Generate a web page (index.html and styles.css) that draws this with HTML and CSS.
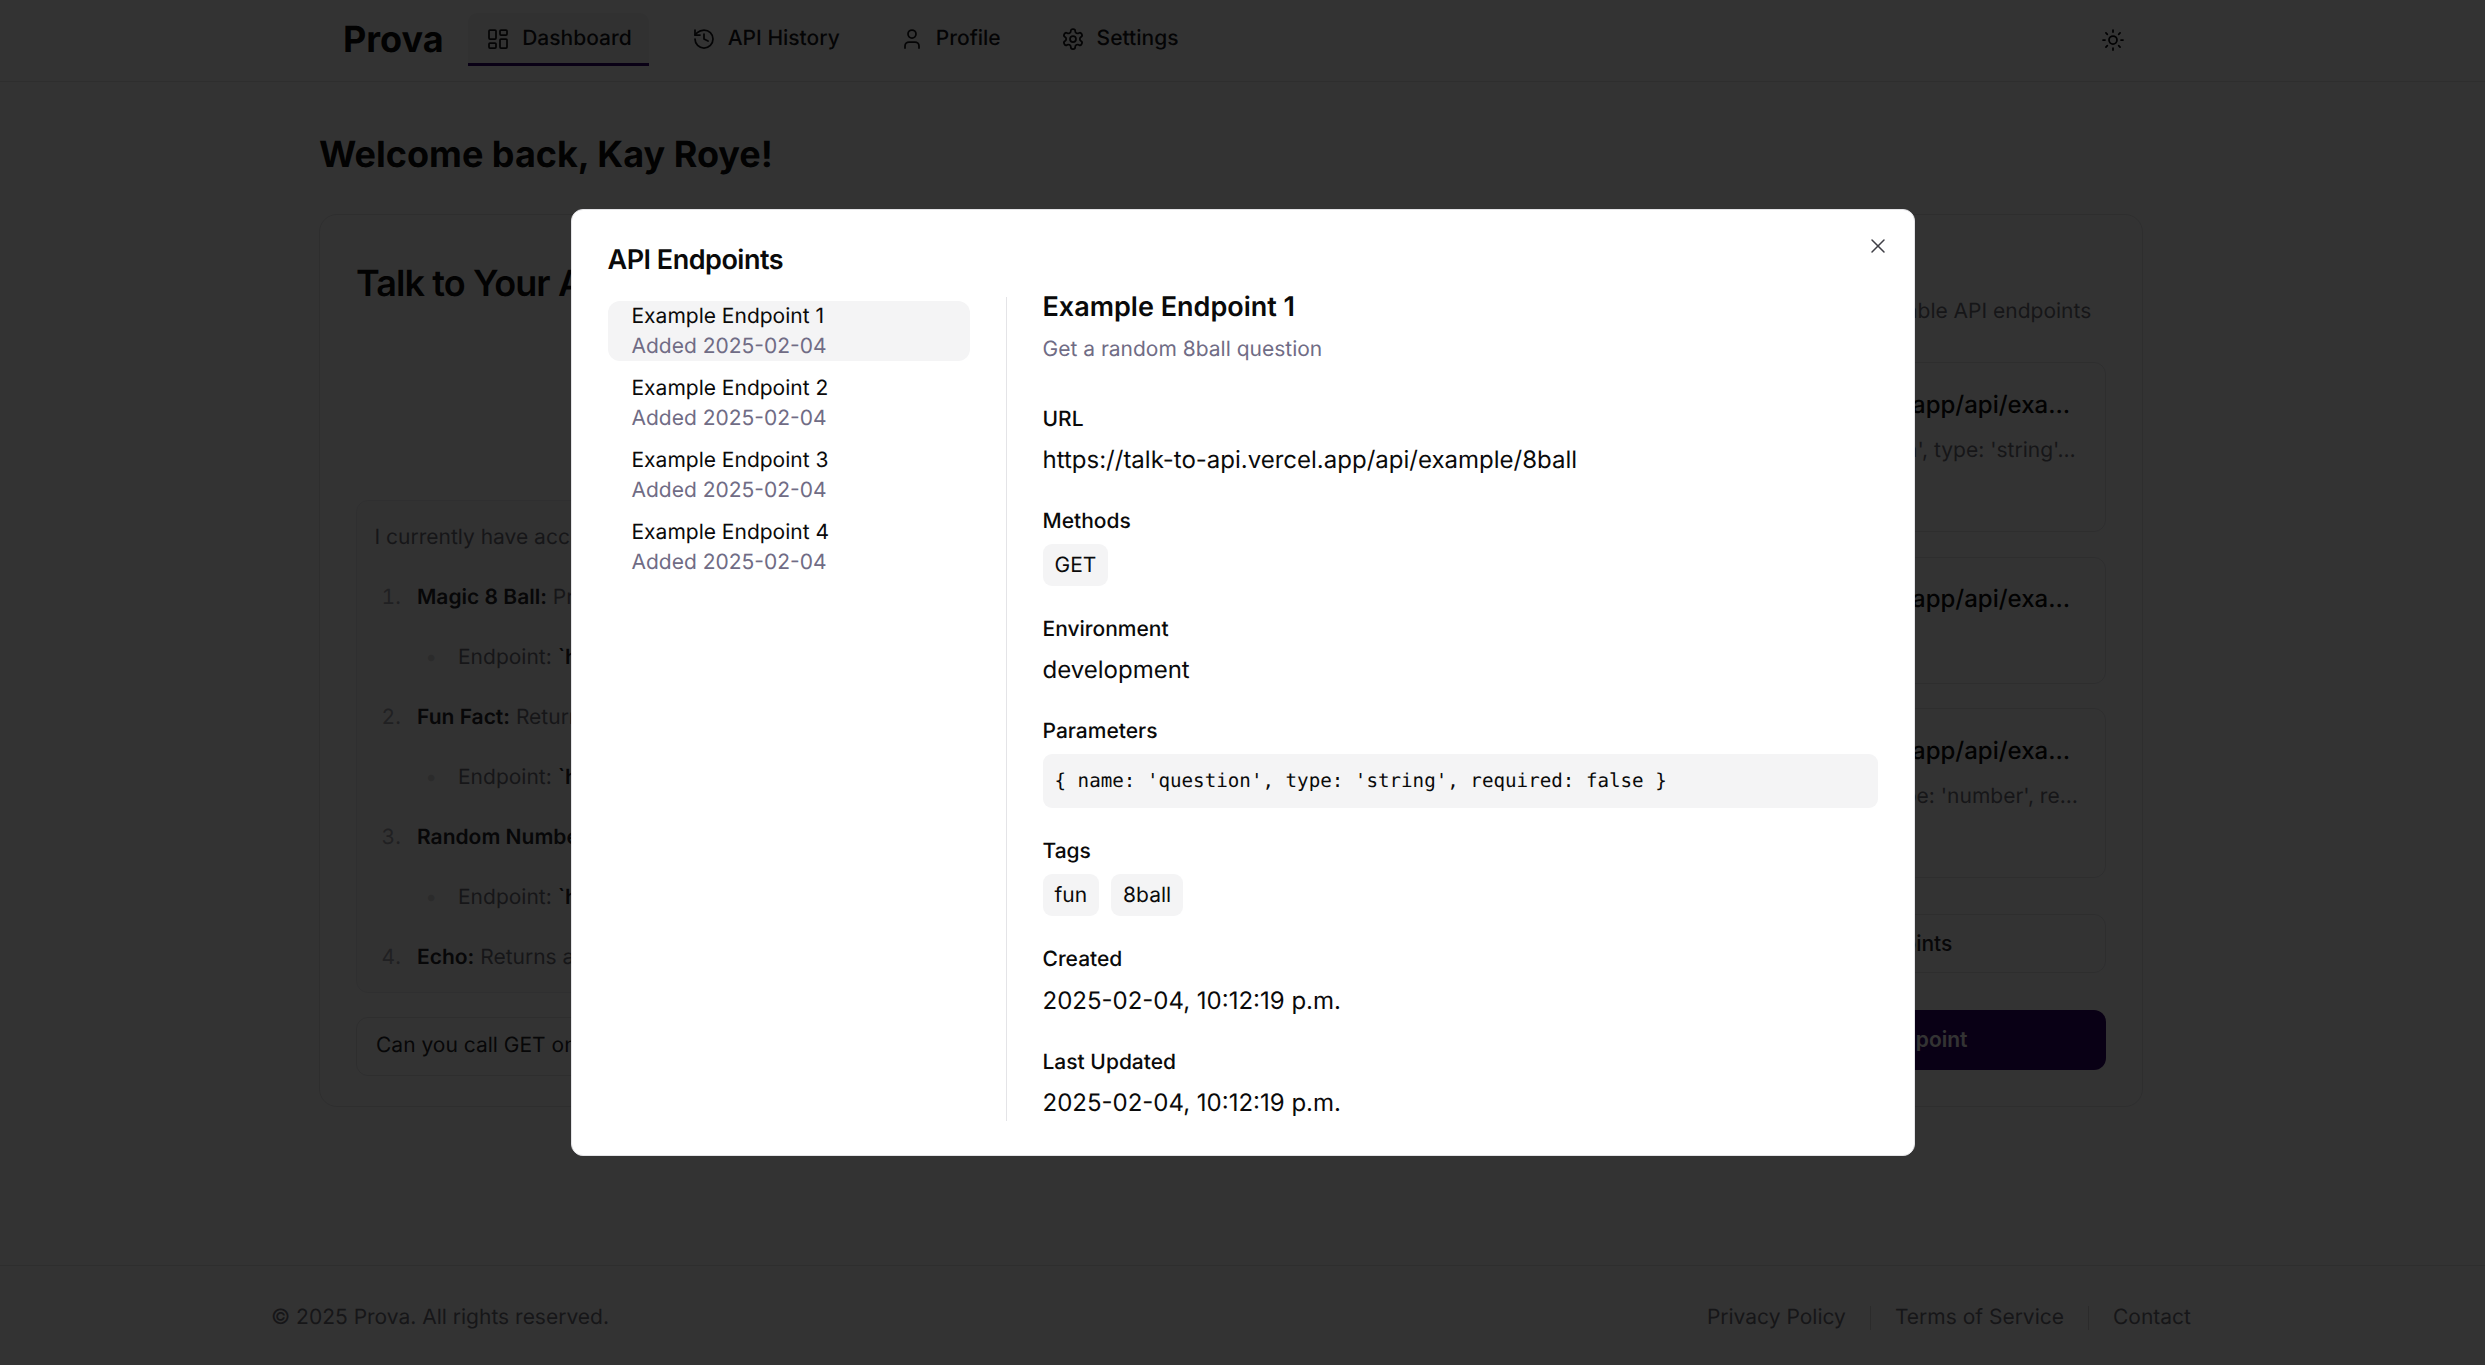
FILE: index.html
```html
<!DOCTYPE html>
<html lang="en">
<head>
<meta charset="utf-8">
<title>Prova</title>
<link rel="stylesheet" href="styles.css">
</head>
<body>
<div class="page">
  <header class="topbar">
    <div class="topbar-inner">
      <a class="brand">Prova</a>
      <nav class="nav">
        <a class="tab tab-active">
          <svg class="icon" viewBox="0 0 24 24"><rect x="3" y="3" width="7" height="9" rx="1"/><rect x="14" y="3" width="7" height="5" rx="1"/><rect x="14" y="12" width="7" height="9" rx="1"/><rect x="3" y="16" width="7" height="5" rx="1"/></svg>
          Dashboard
        </a>
        <a class="tab">
          <svg class="icon" viewBox="0 0 24 24"><path d="M3 12a9 9 0 1 0 9-9 9.75 9.75 0 0 0-6.74 2.74L3 8"/><path d="M3 3v5h5"/><path d="M12 7v5l4 2"/></svg>
          API History
        </a>
        <a class="tab">
          <svg class="icon" viewBox="0 0 24 24"><circle cx="12" cy="7" r="4"/><path d="M5 21v-2a4 4 0 0 1 4-4h6a4 4 0 0 1 4 4v2"/></svg>
          Profile
        </a>
        <a class="tab">
          <svg class="icon" viewBox="0 0 24 24"><path d="M12.22 2h-.44a2 2 0 0 0-2 2v.18a2 2 0 0 1-1 1.73l-.43.25a2 2 0 0 1-2 0l-.15-.08a2 2 0 0 0-2.73.73l-.22.38a2 2 0 0 0 .73 2.73l.15.1a2 2 0 0 1 1 1.72v.51a2 2 0 0 1-1 1.74l-.15.09a2 2 0 0 0-.73 2.73l.22.38a2 2 0 0 0 2.73.73l.15-.08a2 2 0 0 1 2 0l.43.25a2 2 0 0 1 1 1.73V20a2 2 0 0 0 2 2h.44a2 2 0 0 0 2-2v-.18a2 2 0 0 1 1-1.73l.43-.25a2 2 0 0 1 2 0l.15.08a2 2 0 0 0 2.73-.73l.22-.39a2 2 0 0 0-.73-2.73l-.15-.08a2 2 0 0 1-1-1.74v-.5a2 2 0 0 1 1-1.74l.15-.09a2 2 0 0 0 .73-2.73l-.22-.38a2 2 0 0 0-2.73-.73l-.15.08a2 2 0 0 1-2 0l-.43-.25a2 2 0 0 1-1-1.73V4a2 2 0 0 0-2-2z"/><circle cx="12" cy="12" r="3"/></svg>
          Settings
        </a>
      </nav>
      <button class="theme-btn" type="button" aria-label="Toggle theme">
        <svg class="icon" viewBox="0 0 24 24"><circle cx="12" cy="12" r="4"/><path d="M12 2v2"/><path d="M12 20v2"/><path d="m4.93 4.93 1.41 1.41"/><path d="m17.66 17.66 1.41 1.41"/><path d="M2 12h2"/><path d="M20 12h2"/><path d="m6.34 17.66-1.41 1.41"/><path d="m19.07 4.93-1.41 1.41"/></svg>
      </button>
    </div>
  </header>

  <main class="main">
    <h1 class="welcome">Welcome back, Kay Roye!</h1>
    <div class="dash-grid">
      <section class="card chat-card">
        <h2 class="card-title chat-title">Talk to Your API</h2>
        <div class="messages">
          <p class="msg-intro">I currently have access to the following API endpoints:</p>
          <ol class="msg-list">
            <li><strong>Magic 8 Ball:</strong> Provides a random answer to a question.
              <ul><li>Endpoint: <strong>`https://talk-to-api.vercel.app/api/example/8ball`</strong></li></ul></li>
            <li><strong>Fun Fact:</strong> Returns a random fun fact.
              <ul><li>Endpoint: <strong>`https://talk-to-api.vercel.app/api/example/fact`</strong></li></ul></li>
            <li><strong>Random Number:</strong> Returns a random number in a range.
              <ul><li>Endpoint: <strong>`https://talk-to-api.vercel.app/api/example/random`</strong></li></ul></li>
            <li><strong>Echo:</strong> Returns a copy of the message you send.</li>
          </ol>
        </div>
        <div class="chat-input">Can you call GET on the 8ball endpoint?</div>
      </section>

      <section class="card endpoints-card">
        <h2 class="card-title endpoints-title">API Endpoints</h2>
        <p class="endpoints-sub">Below are all your currently available API endpoints</p>
        <div class="ep-list">
          <article class="ep-item">
            <div class="ep-url">https://talk-to-api.vercel.app/api/example/8ball</div>
            <div class="ep-desc">Parameter: { name: 'question', type: 'string', required: false }</div>
            <div class="chip-row"><span class="chip">GET</span></div>
          </article>
          <article class="ep-item">
            <div class="ep-url">https://talk-to-api.vercel.app/api/example/fact</div>
            <div class="chip-row"><span class="chip">GET</span></div>
          </article>
          <article class="ep-item">
            <div class="ep-url">https://talk-to-api.vercel.app/api/example/random</div>
            <div class="ep-desc">Parameter: { name: 'min', type: 'number', required: false }</div>
            <div class="chip-row"><span class="chip">GET</span></div>
          </article>
        </div>
        <button class="btn btn-outline" type="button">See All API Endpoints</button>
        <button class="btn btn-primary" type="button">Add a New API Endpoint</button>
      </section>
    </div>
  </main>

  <footer class="footer">
    <div class="footer-inner">
      <span>© 2025 Prova. All rights reserved.</span>
      <div class="footer-links">
        <a>Privacy Policy</a>
        <span class="sep"></span>
        <a>Terms of Service</a>
        <span class="sep"></span>
        <a>Contact</a>
      </div>
    </div>
  </footer>
</div>

<div class="overlay">
  <div class="modal" role="dialog" aria-label="API Endpoints">
    <h2 class="modal-title">API Endpoints</h2>
    <button class="modal-close" type="button" aria-label="Close">
      <svg class="icon" viewBox="0 0 24 24"><path d="M18 6 6 18"/><path d="m6 6 12 12"/></svg>
    </button>
    <div class="modal-body">
      <ul class="side-list">
        <li class="side-item side-item-active"><div class="side-name">Example Endpoint 1</div><div class="side-date">Added 2025-02-04</div></li>
        <li class="side-item"><div class="side-name">Example Endpoint 2</div><div class="side-date">Added 2025-02-04</div></li>
        <li class="side-item"><div class="side-name">Example Endpoint 3</div><div class="side-date">Added 2025-02-04</div></li>
        <li class="side-item"><div class="side-name">Example Endpoint 4</div><div class="side-date">Added 2025-02-04</div></li>
      </ul>
      <div class="detail">
        <h3 class="detail-title">Example Endpoint 1</h3>
        <p class="detail-desc">Get a random 8ball question</p>
        <div class="field">
          <div class="field-label">URL</div>
          <div class="field-value">https://talk-to-api.vercel.app/api/example/8ball</div>
        </div>
        <div class="field">
          <div class="field-label">Methods</div>
          <div class="chip-row chip-row-tight"><span class="chip">GET</span></div>
        </div>
        <div class="field">
          <div class="field-label">Environment</div>
          <div class="field-value">development</div>
        </div>
        <div class="field">
          <div class="field-label">Parameters</div>
          <pre class="code">{ name: 'question', type: 'string', required: false }</pre>
        </div>
        <div class="field">
          <div class="field-label">Tags</div>
          <div class="chip-row chip-row-tight"><span class="chip">fun</span><span class="chip">8ball</span></div>
        </div>
        <div class="field">
          <div class="field-label">Created</div>
          <div class="field-value">2025-02-04, 10:12:19 p.m.</div>
        </div>
        <div class="field">
          <div class="field-label">Last Updated</div>
          <div class="field-value">2025-02-04, 10:12:19 p.m.</div>
        </div>
      </div>
    </div>
  </div>
</div>
</body>
</html>
```
FILE: styles.css
```css
* { box-sizing: border-box; }
html, body { margin: 0; height: 100%; }
body {
  background: #fff;
  color: #0a0a0a;
  font-family: Inter, "Liberation Sans", sans-serif;
  font-size: 21px;
  line-height: 30px;
  overflow: hidden;
  text-rendering: geometricPrecision;
  -webkit-font-smoothing: antialiased;
}
h1, h2, h3, p, ul, ol, pre { margin: 0; padding: 0; }
button { font: inherit; color: inherit; background: none; border: 0; padding: 0; }
.icon {
  width: 24px;
  height: 24px;
  display: block;
  flex: none;
  fill: none;
  stroke: currentColor;
  stroke-width: 1.75;
  stroke-linecap: round;
  stroke-linejoin: round;
}

/* page */
.page {
  height: 1365px;
  padding-right: 23px;
  display: flex;
  flex-direction: column;
}
.topbar { height: 82px; border-bottom: 1px solid #e4e4e7; margin-right: -23px; padding-right: 23px; flex: none; }
.topbar-inner {
  max-width: 1920px;
  height: 81px;
  margin: 0 auto;
  padding: 0 66px 2px 72px;
  display: flex;
  align-items: center;
}
.brand { font-size: 36px; line-height: 54px; font-weight: 700; margin-right: 24.5px; padding-bottom: 1px; }
.nav { display: flex; gap: 24.5px; flex: 1; }
.tab {
  display: flex;
  align-items: center;
  gap: 12px;
  padding: 11.4px 17.5px 8.6px 18px;
  height: 53px;
  font-weight: 500;
  color: #18181b;
  border-bottom: 3px solid transparent;
}
.tab-active { background: #f4f4f5; border-bottom-color: #2e0068; border-radius: 9px 9px 0 0; }
.theme-btn { color: #09090b; }

.main { flex: 1; width: 100%; max-width: 1920px; margin: 0 auto; padding: 45px 48px 0; }
.welcome { font-size: 36px; line-height: 54px; font-weight: 700; margin-bottom: 33px; }
.dash-grid { display: grid; grid-template-columns: 2fr 1fr; grid-template-rows: 893px; gap: 36px; }
.card { border: 1px solid #e4e4e7; border-radius: 18px; padding: 36px; min-width: 0; min-height: 0; display: flex; flex-direction: column; }
.card-title { font-size: 36px; font-weight: 600; letter-spacing: -0.9px; }

.chat-card { padding-top: 41px; padding-bottom: 30px; }
.chat-title { line-height: 54px; margin-bottom: 190px; }
.messages {
  flex: 1;
  min-height: 0;
  border: 1px solid #ececef;
  background: #fafafa;
  border-radius: 12px;
  padding: 22px 18px 21px 17.5px;
  overflow: hidden;
  color: #71717a;
  white-space: nowrap;
}
.messages strong { color: #27272a; font-weight: 600; }
.msg-list { padding-left: 42.5px; margin-top: 30px; }
.msg-list > li { margin-bottom: 30px; }
.msg-list > li::marker { content: counter(list-item) ". \2002"; color: #a1a1aa; }
.msg-list ul { padding-left: 41px; margin-top: 30px; list-style: disc; }
.msg-list ul li::marker { content: "\2022\2002\2002"; color: #d4d4d8; }
.chat-input {
  margin-top: 24px;
  height: 59px;
  border: 1px solid #e4e4e7;
  border-radius: 12px;
  padding: 0 19px 2px;
  display: flex;
  align-items: center;
  color: #27272a;
}

.endpoints-title { line-height: 36px; }
.endpoints-sub { margin-top: 9.5px; color: #71717a; white-space: nowrap; }
.ep-list { margin-top: 35.5px; display: flex; flex-direction: column; gap: 24.5px; }
.ep-item { border: 1px solid #e4e4e7; border-radius: 12px; padding: 23.5px 24px 11.5px 40px; min-width: 0; }
.ep-url { font-size: 24px; line-height: 36px; font-weight: 500; white-space: nowrap; overflow: hidden; text-overflow: ellipsis; }
.ep-desc { margin-top: 13px; padding-left: 5px; color: #71717a; white-space: nowrap; overflow: hidden; text-overflow: ellipsis; }
.chip-row { display: flex; gap: 12px; margin-top: 12px; }
.chip-row-tight { margin-top: 0; }
.chip { background: #f4f4f5; border-radius: 9px; height: 42px; padding: 1px 12px 0; display: flex; align-items: center; }
.btn { display: block; width: 100%; font-weight: 500; border-radius: 12px; }
.btn-outline { height: 59px; margin-top: 36px; border: 1px solid #e4e4e7; color: #27272a; }
.btn-primary { height: 60px; margin-top: 37px; background: #2e0068; color: #fff; font-weight: 600; }

.footer { flex: none; height: 100px; border-top: 1px solid #e4e4e7; margin-right: -23px; padding-right: 23px; color: #71717a; }
.footer-inner { max-width: 1920px; margin: 0 auto; padding-top: 37px; display: flex; justify-content: space-between; }
.footer-links { display: flex; align-items: center; gap: 24px; }
.sep { width: 1px; height: 24px; background: #d4d4d8; }

/* modal */
.overlay {
  position: fixed;
  inset: 0;
  background: rgba(0, 0, 0, 0.8);
  display: flex;
  align-items: center;
  justify-content: center;
}
.modal {
  position: relative;
  width: 1344px;
  height: 947px;
  background: #fff;
  border: 1px solid #e4e4e7;
  border-radius: 12px;
  padding: 36px;
  display: flex;
  flex-direction: column;
}
.modal-title { font-size: 27px; line-height: 27px; font-weight: 600; letter-spacing: -0.5px; }
.modal-close { position: absolute; top: 24px; right: 24px; color: #3f3f46; }
.modal-close .icon { stroke-width: 1.5; }
.modal-body { flex: 1; min-height: 0; margin-top: 24px; margin-bottom: -1px; display: grid; grid-template-columns: 362px 1fr; gap: 36px; }
.side-list { list-style: none; padding-top: 4px; display: flex; flex-direction: column; gap: 12px; }
.side-item { height: 60px; padding: 1px 24px 0; border-radius: 12px; }
.side-item-active { background: #f4f4f5; }
.side-date { color: #706c85; }
.detail { border-left: 1px solid #e4e4e7; padding-left: 36px; min-width: 0; }
.detail-title { font-size: 27px; line-height: 19px; font-weight: 600; }
.detail-desc { margin-top: 19px; color: #706c85; }
.field { margin-top: 28px; }
.detail-desc + .field { margin-top: 39px; }
.field-label { font-weight: 500; line-height: 32px; margin-bottom: 6.1px; }
.field-value { font-size: 24px; line-height: 36px; }
.code {
  background: #f4f4f5;
  border-radius: 9px;
  height: 54px;
  padding: 0 12px;
  display: flex;
  align-items: center;
  font-family: "DejaVu Sans Mono", monospace;
  font-size: 19.2px;
}
```
